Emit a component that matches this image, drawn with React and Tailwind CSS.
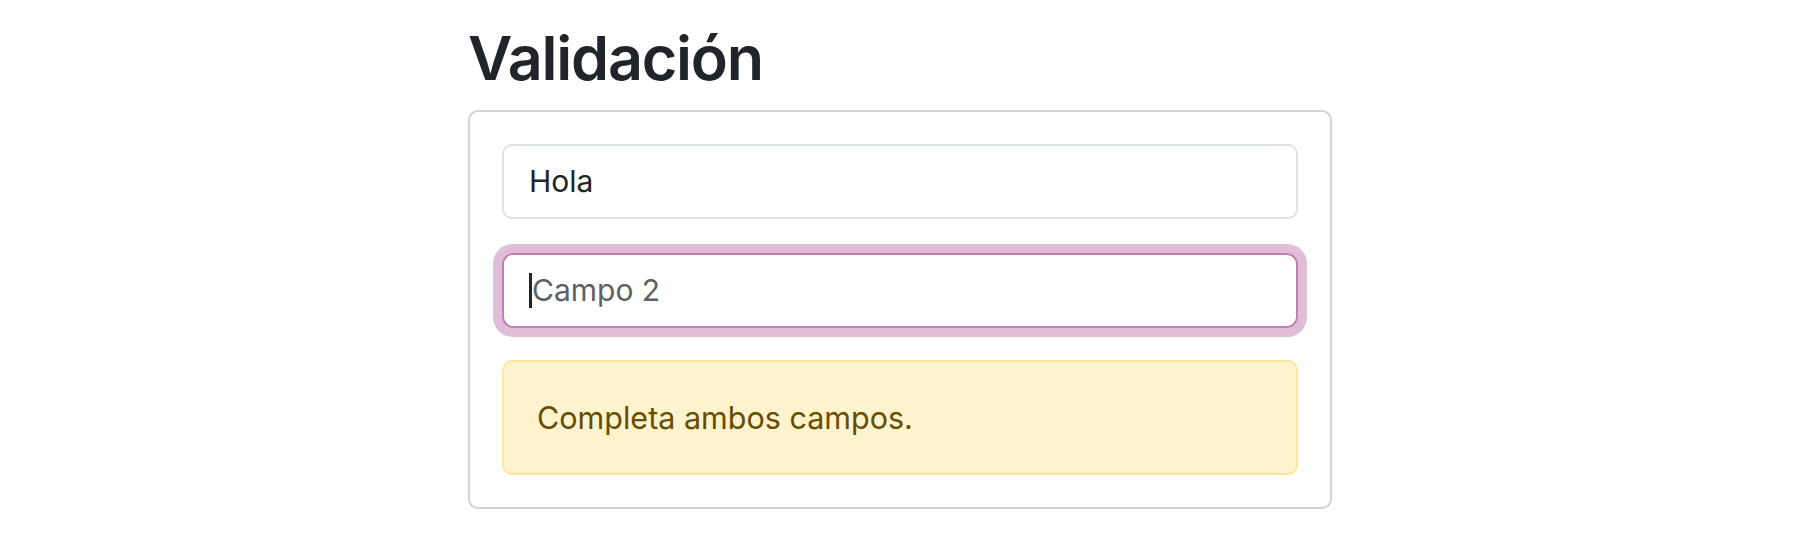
import React from 'react';

export default function App() {
  return (
    <div className="min-h-screen bg-white font-['Inter',sans-serif] text-[#212529]">
      <div className="mx-auto w-[864px] pt-[20px]">
        <h1 className="text-[61px] font-semibold leading-[76px] tracking-[-1.2px] mb-[14px]">Validación</h1>
        <div className="rounded-[10px] border-2 border-[#d3d3d3] p-[32px]">
          <div className="h-[75px] rounded-[10px] border-2 border-[#dee2e6] flex items-center px-[25px] text-[30px] mb-[34px]">
            Hola
          </div>
          <div className="h-[75px] rounded-[11px] border-2 border-[#c07fb0] ring-[9px] ring-[#e1bed7] flex items-center px-[25px] text-[30px] text-[#5c6166] mb-[32px]">
            <span className="inline-block w-[3px] h-[35px] bg-[#212529]"></span>
            Campo 2
          </div>
          <div className="h-[115px] rounded-[10px] border-2 border-[#ffe69c] bg-[#fff3cd] flex items-center px-[33px] text-[30.5px] text-[#664d03]">
            Completa ambos campos.
          </div>
        </div>
      </div>
    </div>
  );
}
